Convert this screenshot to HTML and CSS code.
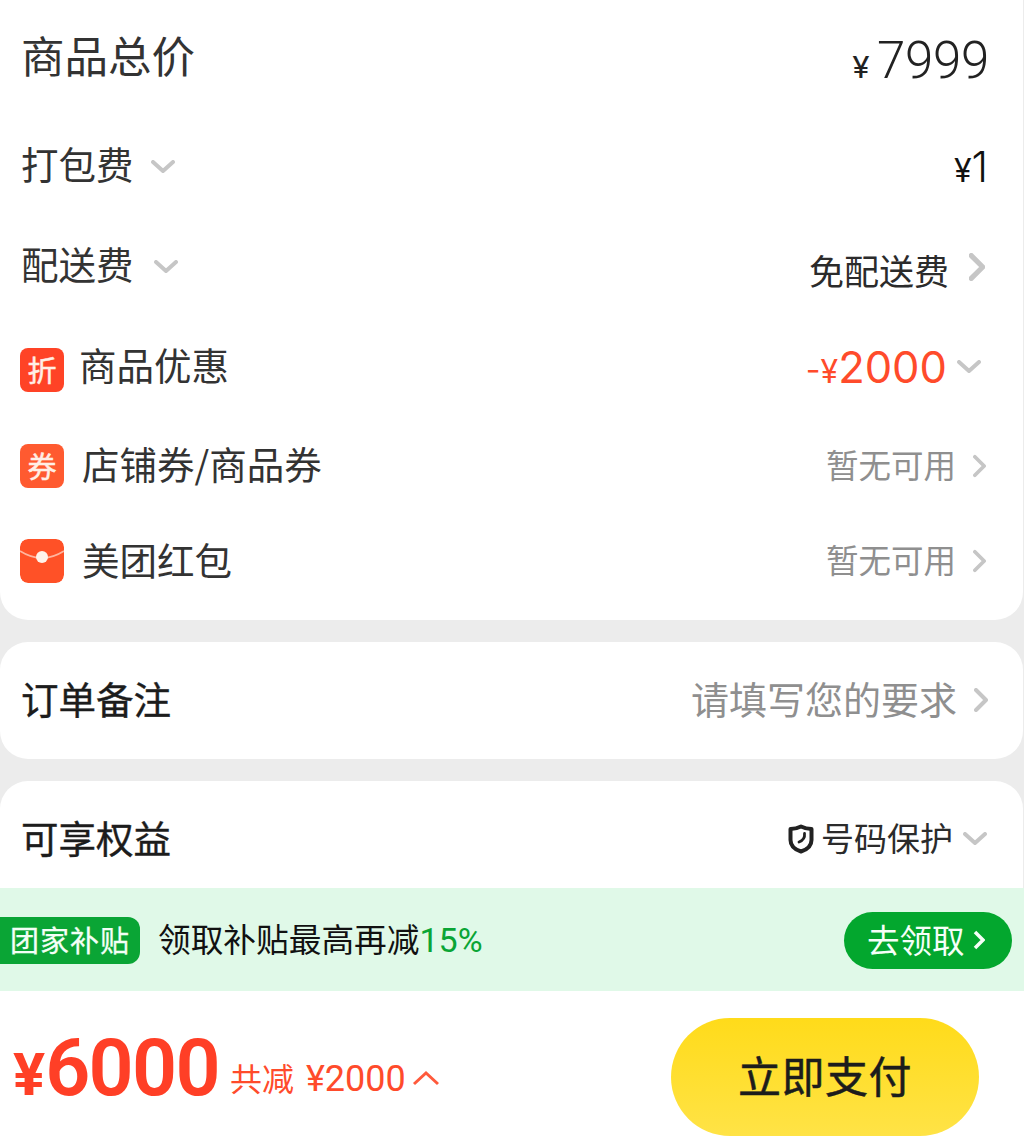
FILE: index.html
```html
<!DOCTYPE html>
<html lang="zh-CN">
<head>
  <meta charset="UTF-8">
  <meta name="viewport" content="width=device-width, initial-scale=1.0">
  <title>提交订单</title>
  <link rel="stylesheet" href="styles.css">
</head>
<body>
  <div class="scroll">
    <section class="card card-price">
      <div class="row row-total">
        <span class="label label-big"><span class="txt">商品总价</span></span>
        <span class="total"><small>¥</small>7999</span>
      </div>
      <div class="row row-pack">
        <span class="label"><span class="txt">打包费</span>
          <svg class="chev-down" viewBox="0 0 24 14"><path d="M2 2l10 9 10-9"/></svg>
        </span>
        <span class="fee">¥<b>1</b></span>
      </div>
      <div class="row row-ship">
        <span class="label"><span class="txt">配送费</span>
          <svg class="chev-down" viewBox="0 0 24 14"><path d="M2 2l10 9 10-9"/></svg>
        </span>
        <span class="right">
          <span class="free">免配送费</span>
          <svg class="chev-right bold" viewBox="0 0 14 24"><path d="M2 2l10 10-10 10"/></svg>
        </span>
      </div>
      <div class="row row-promo">
        <span class="label">
          <span class="badge badge-zhe">折</span><span class="txt">商品优惠</span>
        </span>
        <span class="right">
          <span class="discount">-¥<b>2000</b></span>
          <svg class="chev-down" viewBox="0 0 24 14"><path d="M2 2l10 9 10-9"/></svg>
        </span>
      </div>
      <div class="row row-coupon">
        <span class="label">
          <span class="badge badge-quan">券</span><span class="txt">店铺券/商品券</span>
        </span>
        <span class="right">
          <span class="muted">暂无可用</span>
          <svg class="chev-right" viewBox="0 0 14 24"><path d="M2 2l10 10-10 10"/></svg>
        </span>
      </div>
      <div class="row row-packet">
        <span class="label">
          <svg class="badge" viewBox="0 0 44 44">
            <rect width="44" height="44" rx="8" fill="#ff5127"/>
            <path d="M0 12q22 14 44 0" fill="none" stroke="#ffb59f" stroke-width="1.5"/>
            <circle cx="22" cy="18" r="6" fill="#fff3ea"/>
          </svg><span class="txt">美团红包</span>
        </span>
        <span class="right">
          <span class="muted">暂无可用</span>
          <svg class="chev-right" viewBox="0 0 14 24"><path d="M2 2l10 10-10 10"/></svg>
        </span>
      </div>
    </section>

    <section class="card card-note">
      <div class="row">
        <span class="label label-dark"><span class="txt">订单备注</span></span>
        <span class="right">
          <span class="muted muted-big">请填写您的要求</span>
          <svg class="chev-right" viewBox="0 0 14 24"><path d="M2 2l10 10-10 10"/></svg>
        </span>
      </div>
    </section>

    <section class="card card-rights">
      <div class="row">
        <span class="label label-dark"><span class="txt">可享权益</span></span>
        <span class="right">
          <svg class="shield" viewBox="0 0 26 30">
            <path d="M13 2.500c3 1.500 6.500 2.500 10.500 2.500v11c0 5.500-4 9.500-10.500 11.500C6.500 25.500 2.500 21.500 2.500 16V5C6.500 5 10 4 13 2.500z" fill="none" stroke="#222" stroke-width="4" stroke-linejoin="round"/>
            <path d="M16.500 9.500c.5 4-1.500 7-5.500 8.500" fill="none" stroke="#222" stroke-width="2.800" stroke-linecap="round"/>
          </svg>
          <span class="perk">号码保护</span>
          <svg class="chev-down" viewBox="0 0 24 14"><path d="M2 2l10 9 10-9"/></svg>
        </span>
      </div>
    </section>
  </div>

  <div class="subsidy">
    <span class="subsidy-tag">团家补贴</span>
    <span class="subsidy-text">领取补贴最高再减<em>15%</em></span>
    <span class="subsidy-btn">去领取
      <svg viewBox="0 0 12 20"><path d="M2 2l8 8-8 8"/></svg>
    </span>
  </div>

  <footer class="paybar">
    <div class="amount">
      <span class="pay-price">¥<b>6000</b></span>
      <span class="saved">共减<span class="saved-num">¥2000</span></span>
      <svg class="chev-up" viewBox="0 0 28 16"><path d="M2 14L14 3l12 11"/></svg>
    </div>
    <div class="pay-btn">立即支付</div>
  </footer>
</body>
</html>
```

FILE: styles.css
```css
* {
  box-sizing: border-box;
}

body {
  margin: 0;
  width: 1024px;
  height: 1146px;
  overflow: hidden;
  background: #fff;
  color: #222;
  font-family: "Noto Sans CJK SC", "Noto Sans", sans-serif;
}

svg {
  display: block;
  flex: none;
}

.scroll {
  height: 888px;
  overflow: hidden;
  background: #ececec;
}

.card {
  width: 1023px;
  background: #fff;
  border-radius: 0 0 28px 28px;
  padding: 0 38px 0 21px;
}

.card-price {
  height: 620px;
  margin-bottom: 22px;
}

.card-note {
  height: 117px;
  border-radius: 28px;
  margin-bottom: 22px;
}

.card-rights {
  height: 160px;
  border-radius: 28px;
}

.row {
  display: flex;
  align-items: center;
  justify-content: space-between;
}

.card-note .row {
  height: 115px;
}

.card-rights .row {
  height: 116px;
}

.row-total { height: 116px; }
.row-pack { height: 98px; }
.row-ship { height: 102px; }
.row-promo { height: 102px; }
.row-coupon { height: 96px; }
.row-packet { height: 94px; }

.label {
  display: flex;
  align-items: center;
  font-size: 37.500px;
  line-height: 44px;
  color: #333;
}

/* the CJK face sits low in its line box */
.txt {
  margin-bottom: 4px;
}

.label-big {
  font-size: 43.500px;
}

.label-big .txt {
  margin-bottom: 6px;
}

.label-dark {
  color: #1c1c1c;
  -webkit-text-stroke: 0.4px #1c1c1c;
}

.label .chev-down {
  margin-left: 17px;
  margin-top: 4px;
}

.row-ship .label .chev-down {
  margin-left: 20px;
}

.badge {
  flex: none;
  width: 44px;
  height: 44px;
  margin-left: -1px;
  margin-right: 18px;
  border-radius: 8px;
  color: #ffefe6;
  font-size: 29px;
  line-height: 42px;
  text-align: center;
  -webkit-text-stroke: 0.5px #ffefe6;
}

.badge-zhe {
  background: #ff4326;
  margin-top: 6px;
  margin-right: 15px;
}

.badge-quan {
  background: #ff5a30;
}

.row-promo .txt,
.row-coupon .txt {
  margin-bottom: 6px;
}

.right {
  display: flex;
  align-items: center;
}

.total {
  font-family: "Roboto", "Noto Sans", sans-serif;
  font-size: 51px;
  font-weight: 350;
  line-height: 60px;
  letter-spacing: -0.300px;
  margin-right: -4px;
  margin-top: 12px;
}

.total small {
  font-size: 32px;
  margin-right: 8px;
  font-weight: 400;
}

.fee {
  font-family: "Inter", "Noto Sans", sans-serif;
  font-size: 32px;
  color: #111;
  margin-right: -3px;
  margin-top: 2px;
}

.fee b {
  font-size: 42px;
  font-weight: 300;
}

.free {
  font-size: 35px;
  color: #2b2b2b;
  margin-right: 20px;
  margin-top: 8px;
}

.discount {
  font-family: "Inter", "Noto Sans", sans-serif;
  font-size: 32px;
  color: #ff4b2b;
  margin-right: 10px;
}

.discount b {
  font-size: 43.500px;
  font-weight: 400;
}

.row-promo .chev-down {
  margin-right: 4px;
}

.muted {
  font-size: 32.500px;
  color: #8f8f8f;
  margin-right: 17px;
  margin-bottom: 6px;
}

.muted-big {
  font-size: 38px;
  margin-right: 17px;
  margin-bottom: 4px;
}

.row-coupon .chev-right,
.row-packet .chev-right {
  width: 13px;
  margin-right: -1px;
}

.card-note .chev-right {
  margin-right: -3px;
}

.perk {
  font-size: 33px;
  color: #2b2b2b;
  margin: 0 10px 4px 7px;
}

.card-rights .chev-down {
  margin-right: -2px;
}

.shield {
  width: 26px;
  height: 30px;
  margin-left: 1px;
}

.chev-down {
  width: 24px;
  height: 14px;
}

.chev-down path,
.chev-right path {
  fill: none;
  stroke: #c6c6c6;
  stroke-width: 4;
  stroke-linecap: round;
  stroke-linejoin: round;
}

.chev-right {
  width: 14px;
  height: 24px;
}

.chev-right.bold {
  width: 16px;
  height: 28px;
  margin-top: 4px;
}

.chev-right.bold path {
  stroke-width: 4.500;
}

.subsidy {
  height: 103px;
  display: flex;
  align-items: center;
  padding-top: 2px;
  background: #e0f9e8;
}

.subsidy-tag {
  width: 140px;
  height: 47px;
  border-radius: 0 12px 12px 0;
  background: #0aa535;
  color: #f3fff6;
  font-size: 29px;
  line-height: 44px;
  text-align: center;
  letter-spacing: 1px;
  -webkit-text-stroke: 0.3px #f3fff6;
}

.subsidy-text {
  margin-left: 18px;
  margin-bottom: 6px;
  font-size: 32.700px;
  color: #111;
}

.subsidy-text em {
  font-family: "Roboto", "Noto Sans", sans-serif;
  font-style: normal;
  font-size: 34px;
  color: #0aa535;
}

.subsidy-btn {
  display: flex;
  align-items: center;
  gap: 10px;
  width: 168px;
  height: 57px;
  margin-left: auto;
  margin-right: 12px;
  padding: 0 0 4px 23px;
  border-radius: 29px;
  background: #03a72e;
  color: #f5fff8;
  font-size: 32.500px;
  line-height: 53px;
}

.subsidy-btn svg {
  width: 12px;
  height: 20px;
  margin-left: -2px;
  margin-top: 3px;
}

.subsidy-btn path {
  fill: none;
  stroke: #f5fff8;
  stroke-width: 3.500;
}

.paybar {
  height: 155px;
  display: flex;
  align-items: center;
  justify-content: space-between;
  padding: 27px 45px 10px 13px;
  background: #fff;
}

.amount {
  display: flex;
  align-items: center;
  margin-bottom: 18px;
  color: #ff4b2b;
  font-family: "Roboto", "Noto Sans", sans-serif;
}

.pay-price {
  font-size: 60px;
  font-weight: 700;
  color: #ff3f26;
}

.pay-price b {
  font-size: 79px;
  font-weight: 600;
  letter-spacing: -1.700px;
}

.saved {
  margin-left: 11px;
  margin-top: 18px;
  font-family: "Noto Sans CJK SC", sans-serif;
  font-size: 32px;
}

.saved-num {
  margin-left: 12px;
  font-family: "Roboto", "Noto Sans", sans-serif;
  font-size: 36px;
}

.chev-up {
  width: 28px;
  height: 16px;
  margin-left: 6px;
  margin-top: 20px;
}

.chev-up path {
  fill: none;
  stroke: #ff5a3c;
  stroke-width: 3;
}

.pay-btn {
  width: 308px;
  height: 118px;
  border-radius: 59px;
  background: linear-gradient(#ffdb1a, #ffe346);
  color: #1c1c1c;
  font-size: 43px;
  line-height: 112px;
  text-align: center;
  letter-spacing: 0.500px;
  -webkit-text-stroke: 0.5px #1c1c1c;
}
```
